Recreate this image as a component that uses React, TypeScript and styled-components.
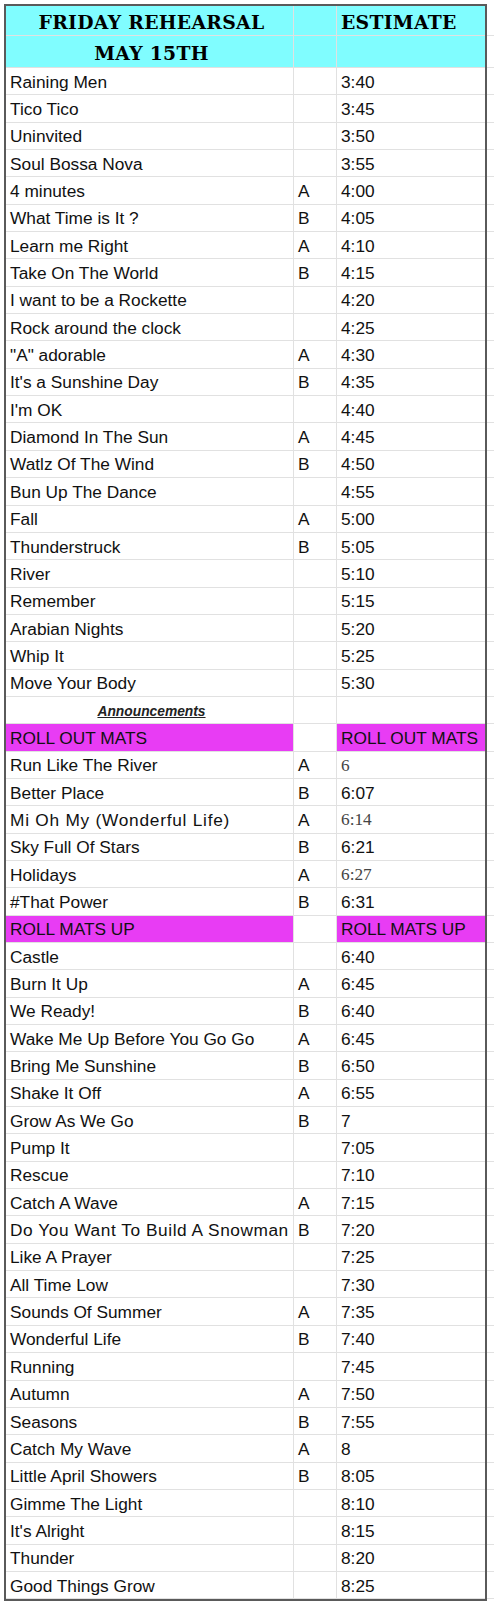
import React from "react";
import styled, { createGlobalStyle } from "styled-components";

type Song = {
  title: string;
  group?: "A" | "B";
  time?: string;
  serifTime?: boolean;
  spacing?: number;
  kind?: "song" | "note" | "mats";
};

const songs: Song[] = [
  { title: "Raining Men", time: "3:40" },
  { title: "Tico Tico", time: "3:45" },
  { title: "Uninvited", time: "3:50" },
  { title: "Soul Bossa Nova", time: "3:55" },
  { title: "4 minutes", group: "A", time: "4:00" },
  { title: "What Time is It ?", group: "B", time: "4:05" },
  { title: "Learn me Right", group: "A", time: "4:10" },
  { title: "Take On The World", group: "B", time: "4:15" },
  { title: "I want to be a Rockette", time: "4:20" },
  { title: "Rock around the clock", time: "4:25" },
  { title: "\"A\" adorable", group: "A", time: "4:30" },
  { title: "It's a Sunshine Day", group: "B", time: "4:35" },
  { title: "I'm OK", time: "4:40" },
  { title: "Diamond In The Sun", group: "A", time: "4:45" },
  { title: "Watlz Of The Wind", group: "B", time: "4:50" },
  { title: "Bun Up The Dance", time: "4:55" },
  { title: "Fall", group: "A", time: "5:00" },
  { title: "Thunderstruck", group: "B", time: "5:05" },
  { title: "River", time: "5:10" },
  { title: "Remember", time: "5:15" },
  { title: "Arabian Nights", time: "5:20" },
  { title: "Whip It", time: "5:25" },
  { title: "Move Your Body", time: "5:30" },
  { title: "Announcements", kind: "note" },
  { title: "ROLL OUT MATS", time: "ROLL OUT MATS", kind: "mats" },
  { title: "Run Like The River", group: "A", time: "6", serifTime: true },
  { title: "Better Place", group: "B", time: "6:07" },
  { title: "Mi Oh My (Wonderful Life)", group: "A", time: "6:14", serifTime: true, spacing: 0.75 },
  { title: "Sky Full Of Stars", group: "B", time: "6:21" },
  { title: "Holidays", group: "A", time: "6:27", serifTime: true },
  { title: "#That Power", group: "B", time: "6:31" },
  { title: "ROLL MATS UP", time: "ROLL MATS UP", kind: "mats" },
  { title: "Castle", time: "6:40" },
  { title: "Burn It Up", group: "A", time: "6:45" },
  { title: "We Ready!", group: "B", time: "6:40" },
  { title: "Wake Me Up Before You Go Go", group: "A", time: "6:45" },
  { title: "Bring Me Sunshine", group: "B", time: "6:50" },
  { title: "Shake It Off", group: "A", time: "6:55" },
  { title: "Grow As We Go", group: "B", time: "7" },
  { title: "Pump It", time: "7:05" },
  { title: "Rescue", time: "7:10" },
  { title: "Catch A Wave", group: "A", time: "7:15" },
  { title: "Do You Want To Build A Snowman", group: "B", time: "7:20", spacing: 0.55 },
  { title: "Like A Prayer", time: "7:25" },
  { title: "All Time Low", time: "7:30" },
  { title: "Sounds Of Summer", group: "A", time: "7:35" },
  { title: "Wonderful Life", group: "B", time: "7:40" },
  { title: "Running", time: "7:45" },
  { title: "Autumn", group: "A", time: "7:50" },
  { title: "Seasons", group: "B", time: "7:55" },
  { title: "Catch My Wave", group: "A", time: "8" },
  { title: "Little April Showers", group: "B", time: "8:05" },
  { title: "Gimme The Light", time: "8:10" },
  { title: "It's Alright", time: "8:15" },
  { title: "Thunder", time: "8:20" },
  { title: "Good Things Grow", time: "8:25" },
];

const ROW_H = 27.357;
const gridLine = "#e1e1e1";
const cyan = "#80fdff";
const magenta = "#e83cf4";

const GlobalStyle = createGlobalStyle`
  html, body {
    margin: 0;
    padding: 0;
    background: #ffffff;
  }
`;

const Page = styled.div`
  display: flex;
  align-items: flex-start;
  padding: 4px 0 0 4px;
`;

const Sheet = styled.div`
  border: 2px solid #5a5a5a;
  display: flex;
  flex-direction: column;
`;

const Row = styled.div<{ $h: number }>`
  display: grid;
  grid-template-columns: 288px 43px 148px;
  height: ${(p) => p.$h}px;
`;

const Cell = styled.div<{
  $bg?: string;
  $center?: boolean;
  $last?: boolean;
  $spacing?: number;
}>`
  box-sizing: border-box;
  display: flex;
  align-items: center;
  justify-content: ${(p) => (p.$center ? "center" : "flex-start")};
  padding: 2px 0 0 4px;
  background: ${(p) => p.$bg || "transparent"};
  border-bottom: 1px solid ${gridLine};
  border-right: ${(p) => (p.$last ? "none" : `1px solid ${gridLine}`)};
  font-family: "Liberation Sans", Arial, sans-serif;
  font-size: 17.3px;
  letter-spacing: ${(p) => p.$spacing || 0}px;
  color: #111111;
  white-space: pre;
  overflow: hidden;
`;

const HeadText = styled.span`
  font-family: "DejaVu Serif", "Liberation Serif", serif;
  font-weight: bold;
  font-size: 18.8px;
  letter-spacing: 0.3px;
  color: #000000;
`;

const SerifTime = styled.span`
  font-family: "Liberation Serif", "Times New Roman", serif;
  font-size: 17.3px;
  letter-spacing: 0;
  color: #444444;
`;

const Note = styled.span`
  font-family: "Liberation Sans", Arial, sans-serif;
  font-weight: bold;
  font-style: italic;
  font-size: 13.8px;
  text-decoration: underline;
  color: #222222;
`;

const Ghost = styled.div`
  display: flex;
  flex-direction: column;
  width: 7px;
  padding-top: 2px;
`;

const GhostLine = styled.div<{ $h: number }>`
  box-sizing: border-box;
  height: ${(p) => p.$h}px;
  border-bottom: 1px solid ${gridLine};
`;

const SongRow: React.FC<{ song: Song }> = ({ song }) => {
  if (song.kind === "note") {
    return (
      <Row $h={ROW_H}>
        <Cell $center>
          <Note>{song.title}</Note>
        </Cell>
        <Cell />
        <Cell $last />
      </Row>
    );
  }
  const bg = song.kind === "mats" ? magenta : undefined;
  return (
    <Row $h={ROW_H}>
      <Cell $bg={bg} $spacing={song.spacing}>
        {song.title}
      </Cell>
      <Cell>{song.group}</Cell>
      <Cell $bg={bg} $last>
        {song.serifTime ? <SerifTime>{song.time}</SerifTime> : song.time}
      </Cell>
    </Row>
  );
};

const App: React.FC = () => {
  const heights = [30, 32, ...songs.map(() => ROW_H)];
  return (
    <>
      <GlobalStyle />
      <Page>
        <Sheet>
          <Row $h={30}>
            <Cell $bg={cyan} $center>
              <HeadText>FRIDAY REHEARSAL</HeadText>
            </Cell>
            <Cell $bg={cyan} />
            <Cell $bg={cyan} $last>
              <HeadText>ESTIMATE</HeadText>
            </Cell>
          </Row>
          <Row $h={32}>
            <Cell $bg={cyan} $center>
              <HeadText>MAY 15TH</HeadText>
            </Cell>
            <Cell $bg={cyan} />
            <Cell $bg={cyan} $last />
          </Row>
          {songs.map((s, i) => (
            <SongRow key={i} song={s} />
          ))}
        </Sheet>
        <Ghost>
          {heights.map((h, i) => (
            <GhostLine key={i} $h={h} />
          ))}
        </Ghost>
      </Page>
    </>
  );
};

export default App;
